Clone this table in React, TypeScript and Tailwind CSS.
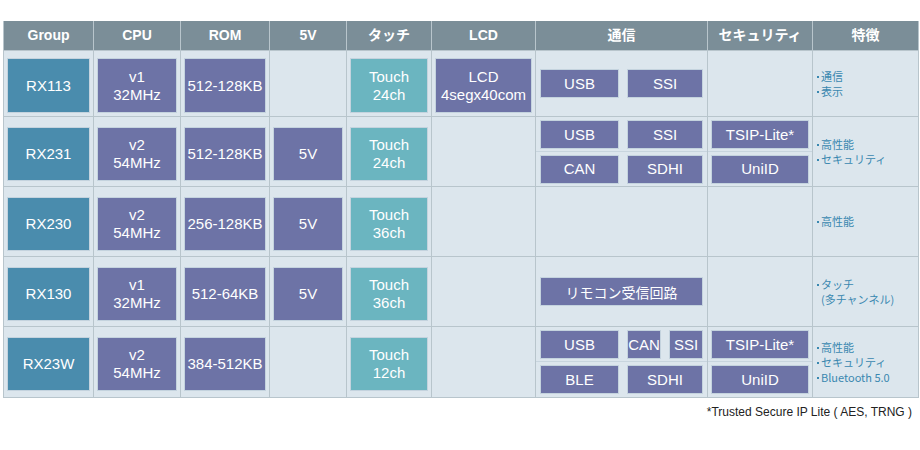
import React from "react";

type Kind = "g" | "p" | "t";

const kindCls: Record<Kind, string> = {
  g: "bg-[#4a8cad]",
  p: "bg-[#6d73a6]",
  t: "bg-[#6bb5c0]",
};

function Box({ kind, children, className = "" }: { kind: Kind; children: React.ReactNode; className?: string }) {
  return (
    <div
      className={`${kindCls[kind]} border border-[#c4d3de] text-white flex flex-col items-center justify-center text-center text-[15px] leading-[18px] ${className}`}
    >
      {children}
    </div>
  );
}

function Cell({ children, top }: { children?: React.ReactNode; top: string }) {
  return <div className={`bg-[#dce6ed] px-[3px] ${top}`}>{children}</div>;
}

function Head({ children }: { children: React.ReactNode }) {
  return (
    <div className="bg-[#7b8e98] text-white font-bold text-[14px] flex items-center justify-center">
      {children}
    </div>
  );
}

function Feat({ lines }: { lines: React.ReactNode[] }) {
  return (
    <div
      className="bg-[#dce6ed] pl-[4px] flex flex-col justify-center text-[11px] leading-[15px] text-[#3a88b0]"
      style={{ fontFamily: '"Noto Sans CJK JP", "Noto Sans", sans-serif' }}
    >
      {lines.map((l, i) => (
        <div key={i} className="flex items-center whitespace-nowrap h-[15px]">
          {l}
        </div>
      ))}
    </div>
  );
}

const Dot = () => <span className="inline-block w-[2px] h-[2px] bg-[#3a88b0] mr-[2px] mt-[1px]" />;

function CommSingle({ children }: { children?: React.ReactNode }) {
  return <div className="bg-[#dce6ed] flex items-center px-[4px] gap-[8px]">{children}</div>;
}

function Split({ a, b, px }: { a: React.ReactNode; b: React.ReactNode; px: string }) {
  return (
    <div className="bg-[#dce6ed] flex flex-col">
      <div className={`h-[35px] border-b border-[#c8d5de] flex items-start pt-[3px] gap-[8px] ${px}`}>{a}</div>
      <div className={`flex-1 flex items-center gap-[8px] ${px}`}>{b}</div>
    </div>
  );
}

export default function App() {
  const big = "h-[55px]";
  const reg = "h-[54px]";
  const r1 = "pt-[7px]";
  const rn = "pt-[10px]";
  return (
    <div
      className="w-[920px] h-[450px] bg-white relative"
      style={{ fontFamily: '"Liberation Sans", Arial, "Noto Sans CJK JP", sans-serif' }}
    >
      <div className="pt-[21px] pl-[3px]">
        <div className="grid grid-cols-[89px_86px_88px_76px_84px_103px_171px_104px_105px] grid-rows-[29px_65px_69px_69px_69px_70px] gap-px bg-[#b8c5cc] px-px pb-px w-[916px]">
          <Head>Group</Head>
          <Head>CPU</Head>
          <Head>ROM</Head>
          <Head>5V</Head>
          <Head>タッチ</Head>
          <Head>LCD</Head>
          <Head>通信</Head>
          <Head>セキュリティ</Head>
          <Head>特徴</Head>

          {/* RX113 */}
          <Cell top={r1}><Box kind="g" className={big}>RX113</Box></Cell>
          <Cell top={r1}><Box kind="p" className={big}><div>v1</div><div>32MHz</div></Box></Cell>
          <Cell top={r1}><Box kind="p" className={big}>512-128KB</Box></Cell>
          <Cell top={r1} />
          <Cell top={r1}><Box kind="t" className={big}><div>Touch</div><div>24ch</div></Box></Cell>
          <Cell top={r1}><Box kind="p" className={big}><div>LCD</div><div>4segx40com</div></Box></Cell>
          <CommSingle>
            <Box kind="p" className="h-[29px] w-[79px]">USB</Box>
            <Box kind="p" className="h-[29px] w-[76px]">SSI</Box>
          </CommSingle>
          <Cell top={r1} />
          <Feat lines={[<><Dot />通信</>, <><Dot />表示</>]} />

          {/* RX231 */}
          <Cell top={rn}><Box kind="g" className={reg}>RX231</Box></Cell>
          <Cell top={rn}><Box kind="p" className={reg}><div>v2</div><div>54MHz</div></Box></Cell>
          <Cell top={rn}><Box kind="p" className={reg}>512-128KB</Box></Cell>
          <Cell top={rn}><Box kind="p" className={reg}>5V</Box></Cell>
          <Cell top={rn}><Box kind="t" className={reg}><div>Touch</div><div>24ch</div></Box></Cell>
          <Cell top={rn} />
          <Split
            px="px-[4px]"
            a={<><Box kind="p" className="h-[29px] w-[79px]">USB</Box><Box kind="p" className="h-[29px] w-[76px]">SSI</Box></>}
            b={<><Box kind="p" className="h-[29px] w-[79px]">CAN</Box><Box kind="p" className="h-[29px] w-[76px]">SDHI</Box></>}
          />
          <Split
            px="px-[3px]"
            a={<Box kind="p" className="h-[29px] w-[98px]">TSIP-Lite*</Box>}
            b={<Box kind="p" className="h-[29px] w-[98px]">UniID</Box>}
          />
          <Feat lines={[<><Dot />高性能</>, <><Dot />セキュリティ</>]} />

          {/* RX230 */}
          <Cell top={rn}><Box kind="g" className={reg}>RX230</Box></Cell>
          <Cell top={rn}><Box kind="p" className={reg}><div>v2</div><div>54MHz</div></Box></Cell>
          <Cell top={rn}><Box kind="p" className={reg}>256-128KB</Box></Cell>
          <Cell top={rn}><Box kind="p" className={reg}>5V</Box></Cell>
          <Cell top={rn}><Box kind="t" className={reg}><div>Touch</div><div>36ch</div></Box></Cell>
          <Cell top={rn} />
          <Cell top={rn} />
          <Cell top={rn} />
          <Feat lines={[<><Dot />高性能</>]} />

          {/* RX130 */}
          <Cell top={rn}><Box kind="g" className={reg}>RX130</Box></Cell>
          <Cell top={rn}><Box kind="p" className={reg}><div>v1</div><div>32MHz</div></Box></Cell>
          <Cell top={rn}><Box kind="p" className={reg}>512-64KB</Box></Cell>
          <Cell top={rn}><Box kind="p" className={reg}>5V</Box></Cell>
          <Cell top={rn}><Box kind="t" className={reg}><div>Touch</div><div>36ch</div></Box></Cell>
          <Cell top={rn} />
          <CommSingle>
            <Box kind="p" className="h-[29px] w-[163px]">
              <span style={{ fontFamily: '"Noto Sans CJK JP", sans-serif' }} className="text-[14px]">リモコン受信回路</span>
            </Box>
          </CommSingle>
          <Cell top={rn} />
          <Feat lines={[<><Dot />タッチ</>, <span className="pl-[4px]">(多チャンネル)</span>]} />

          {/* RX23W */}
          <Cell top={rn}><Box kind="g" className={reg}>RX23W</Box></Cell>
          <Cell top={rn}><Box kind="p" className={reg}><div>v2</div><div>54MHz</div></Box></Cell>
          <Cell top={rn}><Box kind="p" className={reg}>384-512KB</Box></Cell>
          <Cell top={rn} />
          <Cell top={rn}><Box kind="t" className={reg}><div>Touch</div><div>12ch</div></Box></Cell>
          <Cell top={rn} />
          <Split
            px="px-[4px]"
            a={<><Box kind="p" className="h-[29px] w-[79px]">USB</Box><Box kind="p" className="h-[29px] w-[34px]">CAN</Box><Box kind="p" className="h-[29px] w-[34px]">SSI</Box></>}
            b={<><Box kind="p" className="h-[29px] w-[79px]">BLE</Box><Box kind="p" className="h-[29px] w-[76px]">SDHI</Box></>}
          />
          <Split
            px="px-[3px]"
            a={<Box kind="p" className="h-[29px] w-[98px]">TSIP-Lite*</Box>}
            b={<Box kind="p" className="h-[29px] w-[98px]">UniID</Box>}
          />
          <Feat lines={[<><Dot />高性能</>, <><Dot />セキュリティ</>, <><Dot />Bluetooth 5.0</>]} />
        </div>
      </div>
      <div className="flex justify-end pr-[8px] pt-[7px] text-[12px] leading-[14px] text-[#222]">
        *Trusted Secure IP Lite ( AES, TRNG )
      </div>
    </div>
  );
}
